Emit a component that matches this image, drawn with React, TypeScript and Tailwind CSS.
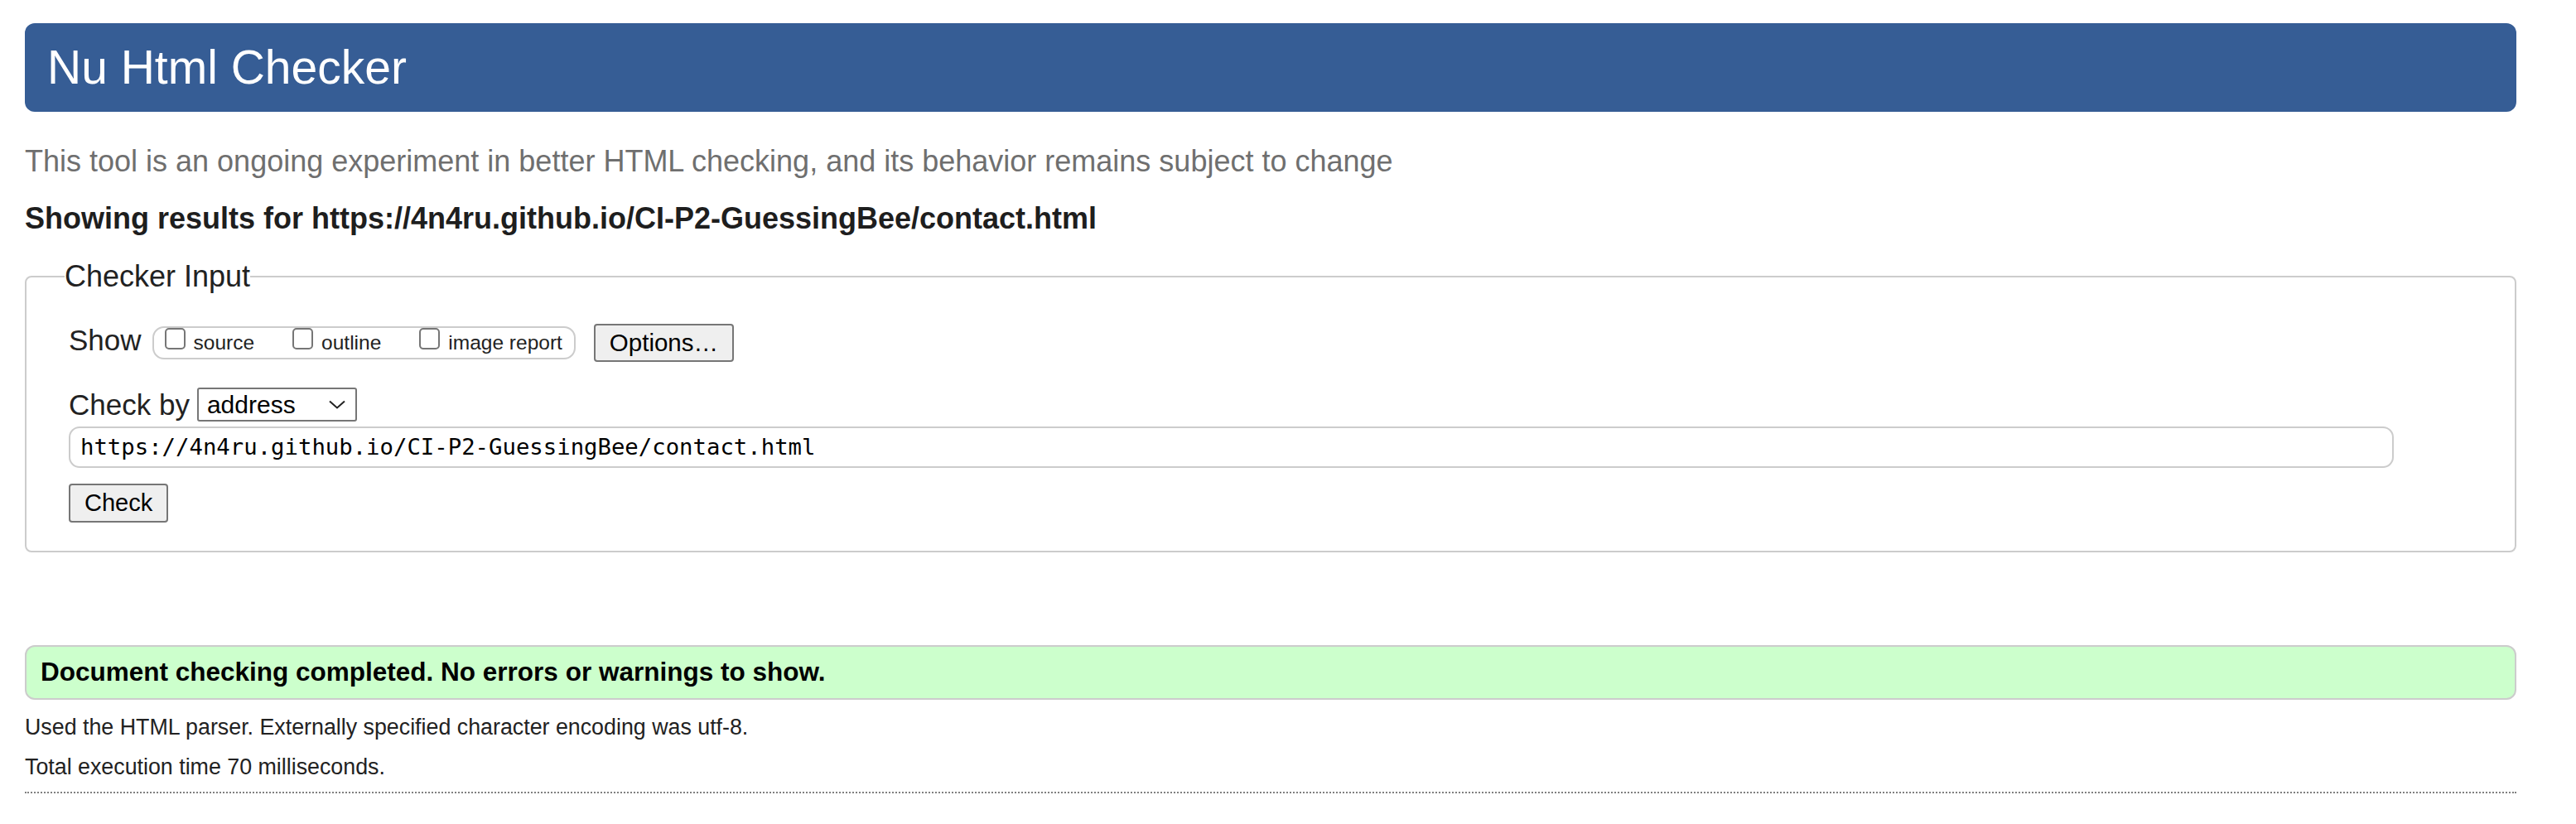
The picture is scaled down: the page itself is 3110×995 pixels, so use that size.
export default function App() {
  return (
    <div className="min-h-screen bg-white pl-[30px] pr-[72px] pt-[28px] text-[#222] font-['Liberation_Sans',Arial,sans-serif]">
      <header className="h-[107px] rounded-[12px] bg-[#365d95] pl-[27px]">
        <h1 className="text-[57px] leading-[107px] text-white font-normal">Nu Html Checker</h1>
      </header>
      <p className="mt-[40px] text-[36px] leading-[40px] text-[#6f6f6f]">
        This tool is an ongoing experiment in better HTML checking, and its behavior remains subject to change
      </p>
      <p className="mt-[29px] text-[36px] leading-[40px] font-bold text-[#1e1e1e]">
        Showing results for https://4n4ru.github.io/CI-P2-GuessingBee/contact.html
      </p>
      <fieldset className="mt-[30px] border-2 border-[#cccccc] rounded-[8px] pl-[46px] pt-[37px] pb-[34px]">
        <legend className="text-[36px] leading-[40px] text-[#222]">Checker Input</legend>
        <div className="pl-[5px]">
          <div className="flex items-center h-[46px]">
            <span className="text-[35px] leading-[40px] mb-[6px]">Show</span>
            <div className="ml-[13px] inline-flex items-start h-[40px] border-2 border-[#cccccc] rounded-[14px] pl-[13px] pr-[14px] gap-[46px] text-[24.5px]">
              {["source", "outline", "image report"].map((t) => (
                <label key={t} className="flex items-start">
                  <span className="block w-[25px] h-[26px] border-2 border-[#767676] rounded-[5px] bg-white" />
                  <span className="ml-[10px] leading-[36px] text-[#222]">{t}</span>
                </label>
              ))}
            </div>
            <button className="ml-[22px] h-[46px] px-[17px] border-2 border-[#767676] rounded-[4px] bg-[#efefef] text-[29.5px] text-black flex items-center">
              Options…
            </button>
          </div>
          <div className="mt-[31px] flex items-center h-[41px]">
            <span className="text-[35px] leading-[40px]">Check by</span>
            <div className="ml-[9px] w-[193px] h-[41px] border-2 border-[#767676] rounded-[3px] flex items-center justify-between pl-[10px] pr-[12px] text-[30px] text-black bg-white">
              <span>address</span>
              <svg width="20" height="11" viewBox="0 0 20 11" fill="none">
                <polyline points="1,1.5 10,9.5 19,1.5" stroke="#222" strokeWidth="2" />
              </svg>
            </div>
          </div>
          <div className="mt-[6px] w-[2807px] h-[50px] border-2 border-[#cccccc] rounded-[13px] pl-[12px] flex items-center font-['DejaVu_Sans_Mono',monospace] text-[27.3px] text-black bg-white">
            https://4n4ru.github.io/CI-P2-GuessingBee/contact.html
          </div>
          <button className="mt-[19px] h-[47px] px-[17px] border-2 border-[#767676] rounded-[4px] bg-[#efefef] text-[29px] text-black flex items-center">
            Check
          </button>
        </div>
      </fieldset>
      <div className="mt-[112px] h-[66px] border-2 border-[#cccccc] rounded-[12px] bg-[#ccffcc] pl-[17px] flex items-center">
        <p className="text-[31.5px] font-bold text-black">Document checking completed. No errors or warnings to show.</p>
      </div>
      <p className="mt-[9px] text-[26.8px] leading-[48px] text-[#222]">
        Used the HTML parser. Externally specified character encoding was utf-8.
      </p>
      <p className="text-[26.8px] leading-[48px] text-[#222]">Total execution time 70 milliseconds.</p>
      <div className="mt-[6px] border-t-2 border-dotted border-[#808080]" />
    </div>
  );
}
